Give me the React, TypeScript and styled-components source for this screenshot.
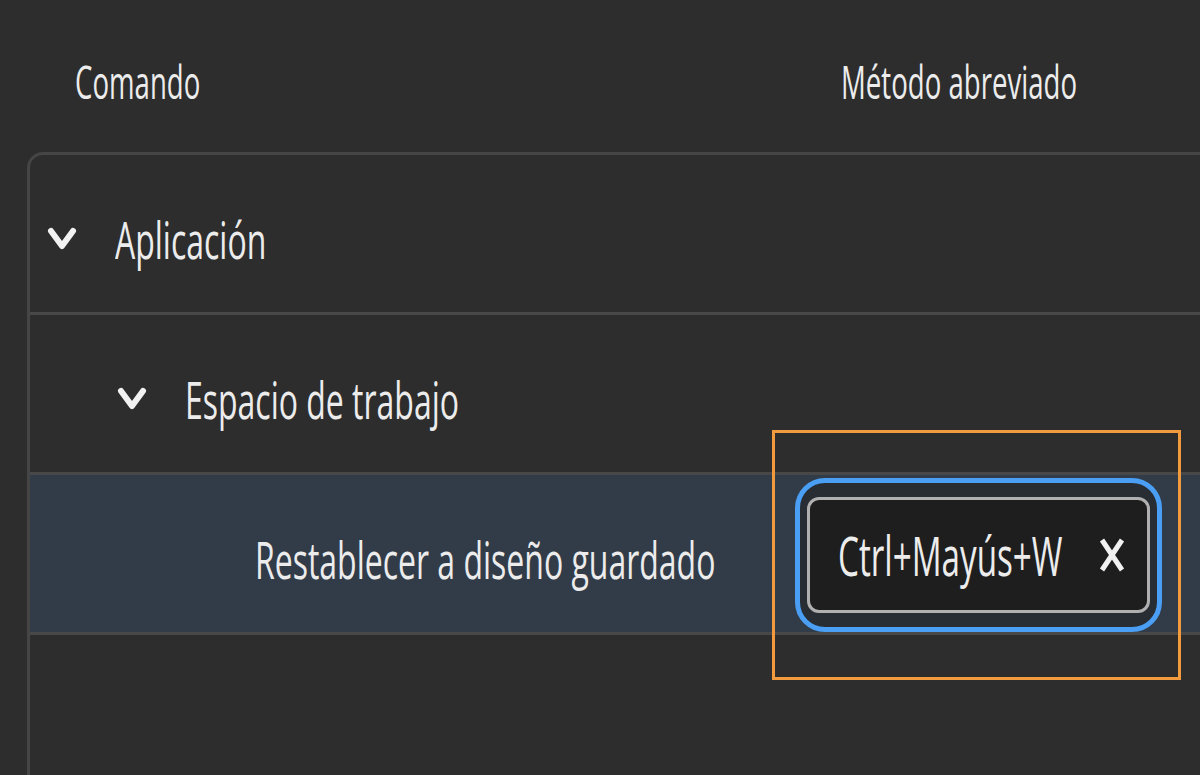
import React from 'react'
import styled, { createGlobalStyle } from 'styled-components'

const GlobalStyle = createGlobalStyle`
  html, body {
    margin: 0;
    padding: 0;
    background: #2d2d2d;
    overflow: hidden;
  }
  #root {
    width: 1200px;
    height: 775px;
    overflow: hidden;
  }
`

const Page = styled.div`
  position: relative;
  width: 1200px;
  height: 775px;
  background: #2d2d2d;
  font-family: 'Open Sans', 'Noto Sans', sans-serif;
  color: #ececec;
`

const HeaderRow = styled.div`
  display: grid;
  grid-template-columns: 766px 1fr;
  align-items: center;
  height: 152px;
  padding: 10px 0 0 75px;
  box-sizing: border-box;
`

// the UI font is a narrow one, so glyphs are squeezed horizontally
const Label = styled.span<{ $size: number; $squeeze?: number }>`
  display: inline-block;
  white-space: nowrap;
  font-size: ${(p) => p.$size}px;
  line-height: 1;
  transform: scaleX(${(p) => p.$squeeze ?? 0.615});
  transform-origin: left center;
`

const Panel = styled.div`
  margin-left: 27px;
  width: 1200px;
  height: 640px;
  border: 3px solid #454545;
  border-right: none;
  border-bottom: none;
  border-radius: 16px 0 0 0;
`

const Row = styled.div<{ $level: number; $selected?: boolean }>`
  display: flex;
  align-items: center;
  height: 147px;
  padding: 10px 0 0 ${(p) => 17 + p.$level * 70}px;
  border-bottom: 3px solid #484848;
  background: ${(p) => (p.$selected ? '#323c48' : 'transparent')};
`

const ChevronSlot = styled.div`
  width: 30px;
  height: 30px;
  margin-right: 38px;
  display: flex;
  align-items: center;
  justify-content: center;
  flex-shrink: 0;
`

const CommandCell = styled.div`
  width: 540px;
  flex-shrink: 0;
`

const ShortcutRing = styled.div`
  margin-top: -8px;
  border: 5px solid #4a9ff5;
  border-radius: 30px;
  padding: 14px 7px;
  background: #282d34;
`

const ShortcutBox = styled.div`
  display: flex;
  align-items: center;
  width: 343px;
  height: 116px;
  box-sizing: border-box;
  padding: 0 22px 0 28px;
  border: 3px solid #b0b0b0;
  border-radius: 12px;
  background: #1e1e1e;
`

const ShortcutText = styled.div`
  flex: 1;
  min-width: 0;
`

const Highlight = styled.div`
  position: absolute;
  left: 772px;
  top: 430px;
  width: 409px;
  height: 250px;
  box-sizing: border-box;
  border: 3px solid #f19a3e;
  pointer-events: none;
`

const Chevron = () => (
  <svg width="30" height="28" viewBox="0 0 30 28">
    <polyline
      points="4,6 15,21 26,6"
      fill="none"
      stroke="#f2f2f2"
      strokeWidth="6"
      strokeLinecap="round"
      strokeLinejoin="round"
    />
  </svg>
)

const CloseIcon = () => (
  <svg width="26" height="34" viewBox="0 0 26 34">
    <path d="M3 2 L23 32 M23 2 L3 32" stroke="#f2f2f2" strokeWidth="5" fill="none" />
  </svg>
)

const App = () => {
  return (
    <Page>
      <GlobalStyle />
      <HeaderRow>
        <Label $size={46} $squeeze={0.6}>Comando</Label>
        <Label $size={46} $squeeze={0.6}>Método abreviado</Label>
      </HeaderRow>
      <Panel>
        <Row $level={0}>
          <ChevronSlot>
            <Chevron />
          </ChevronSlot>
          <Label $size={52}>Aplicación</Label>
        </Row>
        <Row $level={1}>
          <ChevronSlot>
            <Chevron />
          </ChevronSlot>
          <Label $size={52}>Espacio de trabajo</Label>
        </Row>
        <Row $level={2} $selected>
          <ChevronSlot />
          <CommandCell>
            <Label $size={52}>Restablecer a diseño guardado</Label>
          </CommandCell>
          <ShortcutRing>
            <ShortcutBox>
              <ShortcutText>
                <Label $size={54}>Ctrl+Mayús+W</Label>
              </ShortcutText>
              <CloseIcon />
            </ShortcutBox>
          </ShortcutRing>
        </Row>
      </Panel>
      <Highlight />
    </Page>
  )
}

export default App
